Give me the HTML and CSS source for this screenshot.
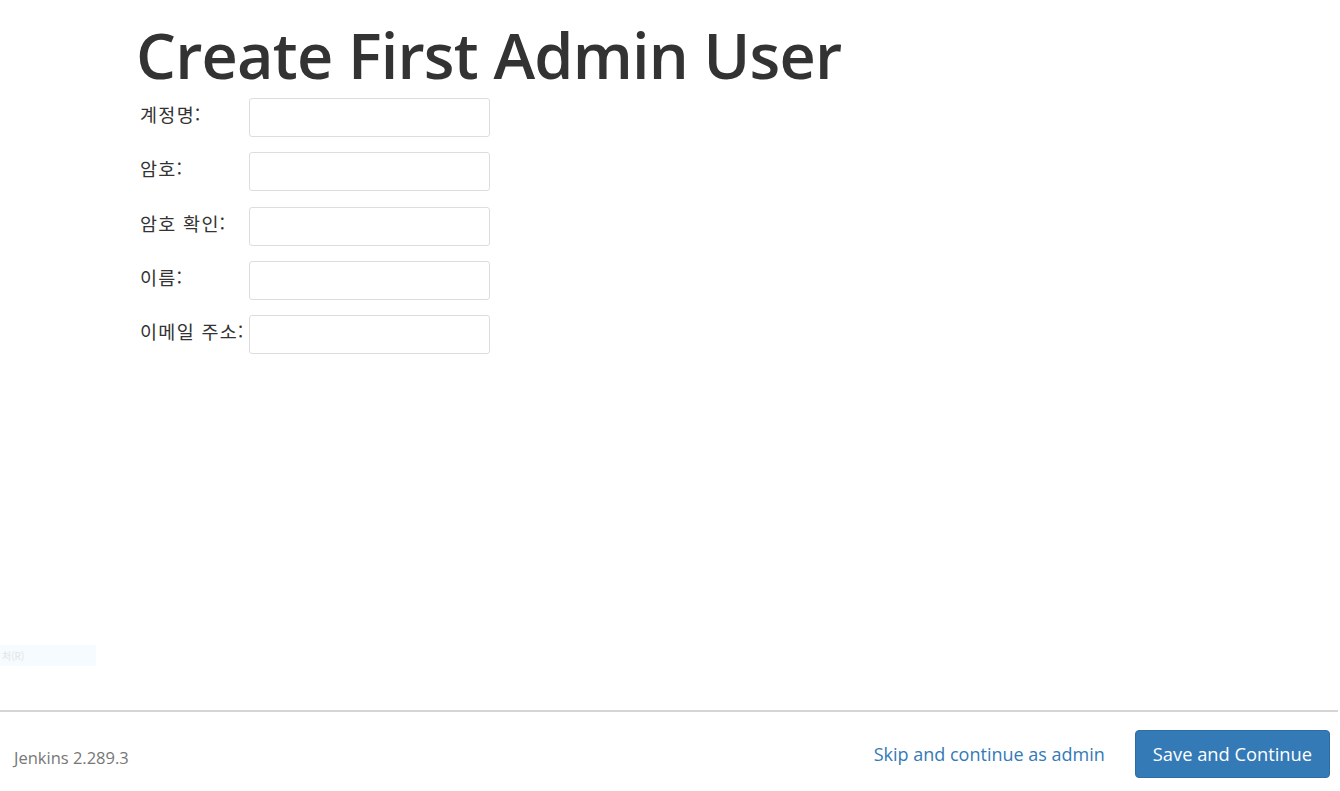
FILE: index.html
```html
<!DOCTYPE html>
<html lang="ko">
<head>
<meta charset="utf-8">
<title>Create First Admin User</title>
<link rel="stylesheet" href="styles.css">
</head>
<body>
<div class="page">
  <main class="content">
    <h1 class="title">Create First Admin User</h1>
    <form class="form">
      <label class="label" for="u">계정명:</label>
      <input class="field" id="u" type="text">
      <label class="label" for="p1">암호:</label>
      <input class="field" id="p1" type="password">
      <label class="label" for="p2">암호 확인:</label>
      <input class="field" id="p2" type="password">
      <label class="label" for="n">이름:</label>
      <input class="field" id="n" type="text">
      <label class="label" for="e">이메일 주소:</label>
      <input class="field" id="e" type="text">
    </form>
  </main>
  <div class="ghost">처(R)</div>
  <footer class="footer">
    <span class="version">Jenkins 2.289.3</span>
    <div class="actions">
      <a class="skip" href="#">Skip and continue as admin</a>
      <button class="save" type="button">Save and Continue</button>
    </div>
  </footer>
</div>
</body>
</html>
```
FILE: styles.css
```css
html, body {
  margin: 0;
  padding: 0;
  background: #fff;
}
body {
  font-family: "Open Sans", "Noto Sans", "Noto Sans CJK KR", sans-serif;
  color: #333;
}
.page {
  position: relative;
  height: 791px;
  display: flex;
  flex-direction: column;
}
.content {
  flex: 1;
  padding: 14px 0 0 136px;
}
.title {
  margin: 0;
  font-size: 63px;
  font-weight: 600;
  line-height: 82px;
  color: #333;
  letter-spacing: -0.8px;
}
.form {
  display: grid;
  grid-template-columns: 109px 241px;
  row-gap: 15.3px;
  align-items: center;
  margin: 2px 0 0 4px;
}
.label {
  font-family: "Noto Sans CJK KR", "Open Sans", sans-serif;
  font-size: 18.5px;
  line-height: 26px;
  letter-spacing: 1.3px;
  color: #333;
  align-self: start;
  padding-top: 3px;
  white-space: nowrap;
}
.field {
  box-sizing: border-box;
  height: 39px;
  width: 241px;
  margin: 0;
  border: 1px solid #ddd;
  border-radius: 3px;
  background: #fff;
  font-size: 16px;
}
.ghost {
  position: absolute;
  left: 0;
  top: 645px;
  width: 96px;
  height: 21px;
  background: #f5fbff;
  color: #e4e4e4;
  font-family: "Noto Sans CJK KR", sans-serif;
  font-size: 10px;
  line-height: 21px;
  padding-left: 2px;
  box-sizing: border-box;
}
.footer {
  height: 79px;
  margin-right: 2px;
  border-top: 2px solid #d5d5d5;
  display: flex;
  align-items: center;
  justify-content: space-between;
  padding: 0 8px 0 14px;
}
.version {
  font-size: 16.5px;
  color: #777;
  padding-top: 12px;
}
.actions {
  display: flex;
  align-items: center;
  gap: 30px;
  padding-top: 4px;
}
.skip {
  color: #337ab7;
  text-decoration: none;
  font-size: 18px;
}
.save {
  background: #337ab7;
  border: 1px solid #2e6da4;
  color: #fff;
  border-radius: 4px;
  height: 48px;
  padding: 0 17px;
  font-family: inherit;
  font-size: 18.3px;
}
```
